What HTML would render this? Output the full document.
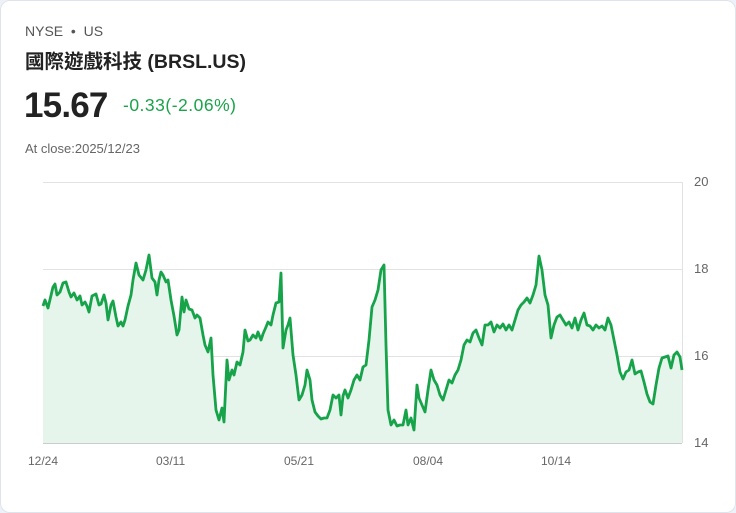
<!DOCTYPE html>
<html><head><meta charset="utf-8"><style>
body{margin:0;width:736px;height:513px;background:#eef2f8;font-family:"Liberation Sans","Noto Sans CJK TC",sans-serif;overflow:hidden}
.card{position:absolute;left:0;top:0;width:734px;height:511px;background:#fff;border:1px solid #dfe4ec;border-radius:10px}
.t{position:absolute;white-space:nowrap}
</style></head><body>
<div class="card"></div>
<div class="t" style="left:25px;top:23px;font-size:14px;color:#555">NYSE &nbsp;•&nbsp; US</div>
<div class="t" style="left:25px;top:45px;font-size:19.5px;font-weight:bold;color:#222">國際遊戲科技 (BRSL.US)</div>
<div class="t" style="left:24px;top:86px;font-size:35px;font-weight:bold;color:#222;letter-spacing:-0.8px">15.67</div>
<div class="t" style="left:123px;top:95px;font-size:17.5px;color:#1aa34a;letter-spacing:0.5px">-0.33(-2.06%)</div>
<div class="t" style="left:25px;top:141px;font-size:13px;color:#666">At close:2025/12/23</div>
<svg style="position:absolute;left:0;top:0" width="736" height="513">
<g stroke="#e2e2e2" stroke-width="1"><line x1="43" y1="182.5" x2="682" y2="182.5"/><line x1="43" y1="269.5" x2="682" y2="269.5"/><line x1="43" y1="356.5" x2="682" y2="356.5"/><line x1="43" y1="443.5" x2="682" y2="443.5" stroke="#ccc"/><line x1="682.5" y1="182" x2="682.5" y2="443"/></g>
<polygon fill="#e6f5eb" points="43,443 43,306 45,300 48,308 53,287 55,284 57,295 60,292 63,283 66,282 69,292 71,297 74,293 77,300 80,296 82,305 85,302 87,306 89,312 92,296 96,294 99,305 101,304 104,295 106,303 108,320 111,305 113,301 116,317 118,326 121,322 123,326 125,320 128,306 131,295 133,280 136,263 139,275 143,280 146,270 149,255 152,278 155,282 157,295 159,280 161,272 163,275 166,282 168,280 171,300 174,316 177,335 179,330 182,297 184,312 186,300 189,309 192,310 195,318 197,315 200,318 203,335 205,345 208,352 211,338 213,375 216,410 219,420 222,408 224,422 227,360 229,380 232,370 234,375 237,362 240,365 243,352 245,330 248,341 250,340 253,335 256,338 258,332 261,340 263,334 266,327 268,322 271,325 273,315 276,303 279,302 281,273 283,348 286,330 288,325 290,318 293,355 296,375 299,400 302,395 305,385 307,370 310,380 312,400 315,412 318,416 321,419 324,418 327,418 330,410 333,395 336,398 339,395 341,415 343,396 345,390 348,398 351,390 354,380 357,375 360,380 363,367 366,365 369,340 372,307 375,300 378,290 381,270 384,265 386,345 388,410 391,425 394,420 397,426 400,425 403,425 406,410 408,425 411,418 414,430 417,385 419,398 422,405 425,412 428,390 431,370 434,380 437,385 440,395 443,400 446,390 449,380 452,383 455,375 458,370 461,360 464,345 467,340 470,342 473,333 476,330 479,338 482,345 485,325 488,325 491,322 494,332 497,325 500,328 503,324 506,330 509,325 512,330 515,320 518,310 521,305 524,302 527,298 530,303 533,295 536,285 539,256 542,270 545,295 548,305 551,338 554,325 557,317 560,315 563,320 566,325 569,322 572,328 575,318 578,330 581,320 584,313 587,325 590,326 593,330 596,325 599,328 602,326 605,330 608,318 611,325 614,340 617,355 620,372 623,379 626,372 629,370 632,360 635,374 638,372 641,371 644,382 647,394 650,402 653,404 656,385 659,368 662,358 665,357 668,356 671,368 674,355 677,352 680,357 682,370 682,443"/>
<polyline fill="none" stroke="#16a34a" stroke-width="2.8" stroke-linejoin="round" points="43,306 45,300 48,308 53,287 55,284 57,295 60,292 63,283 66,282 69,292 71,297 74,293 77,300 80,296 82,305 85,302 87,306 89,312 92,296 96,294 99,305 101,304 104,295 106,303 108,320 111,305 113,301 116,317 118,326 121,322 123,326 125,320 128,306 131,295 133,280 136,263 139,275 143,280 146,270 149,255 152,278 155,282 157,295 159,280 161,272 163,275 166,282 168,280 171,300 174,316 177,335 179,330 182,297 184,312 186,300 189,309 192,310 195,318 197,315 200,318 203,335 205,345 208,352 211,338 213,375 216,410 219,420 222,408 224,422 227,360 229,380 232,370 234,375 237,362 240,365 243,352 245,330 248,341 250,340 253,335 256,338 258,332 261,340 263,334 266,327 268,322 271,325 273,315 276,303 279,302 281,273 283,348 286,330 288,325 290,318 293,355 296,375 299,400 302,395 305,385 307,370 310,380 312,400 315,412 318,416 321,419 324,418 327,418 330,410 333,395 336,398 339,395 341,415 343,396 345,390 348,398 351,390 354,380 357,375 360,380 363,367 366,365 369,340 372,307 375,300 378,290 381,270 384,265 386,345 388,410 391,425 394,420 397,426 400,425 403,425 406,410 408,425 411,418 414,430 417,385 419,398 422,405 425,412 428,390 431,370 434,380 437,385 440,395 443,400 446,390 449,380 452,383 455,375 458,370 461,360 464,345 467,340 470,342 473,333 476,330 479,338 482,345 485,325 488,325 491,322 494,332 497,325 500,328 503,324 506,330 509,325 512,330 515,320 518,310 521,305 524,302 527,298 530,303 533,295 536,285 539,256 542,270 545,295 548,305 551,338 554,325 557,317 560,315 563,320 566,325 569,322 572,328 575,318 578,330 581,320 584,313 587,325 590,326 593,330 596,325 599,328 602,326 605,330 608,318 611,325 614,340 617,355 620,372 623,379 626,372 629,370 632,360 635,374 638,372 641,371 644,382 647,394 650,402 653,404 656,385 659,368 662,358 665,357 668,356 671,368 674,355 677,352 680,357 682,370"/>
<g font-family="Liberation Sans,sans-serif" font-size="13" fill="#666">
<text x="694" y="186">20</text><text x="694" y="273">18</text><text x="694" y="360">16</text><text x="694" y="447">14</text>
<text x="28" y="465" font-size="12">12/24</text><text x="156" y="465" font-size="12">03/11</text><text x="284" y="465" font-size="12">05/21</text><text x="413" y="465" font-size="12">08/04</text><text x="541" y="465" font-size="12">10/14</text>
</g></svg>
</body></html>
